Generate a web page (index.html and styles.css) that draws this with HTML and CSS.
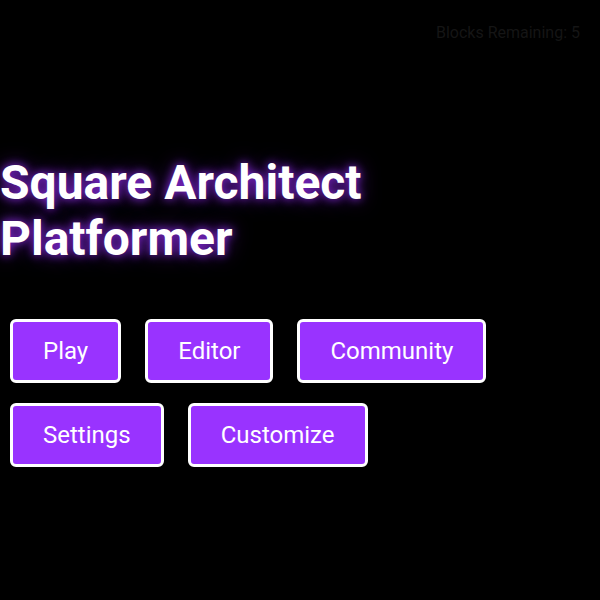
FILE: index.html
```html
<!DOCTYPE html>
<html lang="en">
<head>
<meta charset="utf-8">
<title>Square Architect Platformer</title>
<link rel="stylesheet" href="styles.css">
</head>
<body>
<div class="hud">Blocks Remaining: 5</div>
<main class="menu">
  <h1 class="title">Square Architect<br>Platformer</h1>
  <div class="buttons">
    <button class="btn">Play</button>
    <button class="btn">Editor</button>
    <button class="btn">Community</button>
    <button class="btn">Settings</button>
    <button class="btn">Customize</button>
  </div>
</main>
</body>
</html>
```
FILE: styles.css
```css
html, body {
  margin: 0;
  padding: 0;
  background: #000;
  width: 600px;
  height: 600px;
  overflow: hidden;
  font-family: Roboto, "Liberation Sans", sans-serif;
}
.hud {
  position: absolute;
  top: 23px;
  right: 20px;
  font-size: 16px;
  line-height: 19px;
  color: #151515;
}
.menu {
  padding-top: 155px;
}
.title {
  margin: 0;
  font-size: 48px;
  font-weight: 700;
  line-height: 56px;
  color: #fff;
  text-shadow: 0 0 10px #8a2be2, 0 0 20px #4a1580;
}
.buttons {
  margin-top: 52px;
  padding-left: 10px;
  display: flex;
  flex-wrap: wrap;
  gap: 20px 24px;
}
.btn {
  font-family: Roboto, "Liberation Sans", sans-serif;
  font-size: 24px;
  line-height: 28px;
  padding: 15px 30px;
  color: #fff;
  background: #9933ff;
  border: 3px solid #fff;
  border-radius: 6px;
}
```
